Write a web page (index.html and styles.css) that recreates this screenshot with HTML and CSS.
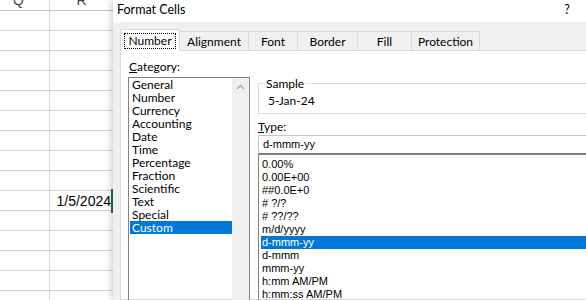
FILE: index.html
```html
<!DOCTYPE html>
<html>
<head>
<meta charset="utf-8">
<link rel="stylesheet" href="styles.css">
</head>
<body>
<div class="screen">
  <div class="sheet">
    <div class="row head"><div class="cell q"><span class="hd">Q</span></div><div class="cell r"><span class="hd">R</span></div></div>
    <div class="row"><div class="cell q"></div><div class="cell r"></div></div>
    <div class="row"><div class="cell q"></div><div class="cell r"></div></div>
    <div class="row"><div class="cell q"></div><div class="cell r"></div></div>
    <div class="row"><div class="cell q"></div><div class="cell r"></div></div>
    <div class="row"><div class="cell q"></div><div class="cell r"></div></div>
    <div class="row"><div class="cell q"></div><div class="cell r"></div></div>
    <div class="row"><div class="cell q"></div><div class="cell r"></div></div>
    <div class="row"><div class="cell q"></div><div class="cell r"></div></div>
    <div class="row"><div class="cell q"></div><div class="cell r"></div></div>
    <div class="row"><div class="cell q"></div><div class="cell r date">1/5/2024</div></div>
    <div class="row"><div class="cell q"></div><div class="cell r"></div></div>
    <div class="row"><div class="cell q"></div><div class="cell r"></div></div>
    <div class="row"><div class="cell q"></div><div class="cell r"></div></div>
    <div class="row"><div class="cell q"></div><div class="cell r"></div></div>
    <div class="row"><div class="cell q"></div><div class="cell r"></div></div>
  </div>
  <div class="dialog">
    <div class="titlebar">
      <span class="title">Format Cells</span>
      <span class="help">?</span>
      <span class="close"></span>
    </div>
    <div class="body">
      <div class="tabs">
        <div class="tab tab-number active"><span class="focus">Number</span></div>
        <div class="tab tab-align">Alignment</div>
        <div class="tab tab-font">Font</div>
        <div class="tab tab-border">Border</div>
        <div class="tab tab-fill">Fill</div>
        <div class="tab tab-prot">Protection</div>
      </div>
      <div class="page">
        <div class="cat-col">
          <div class="label"><u>C</u>ategory:</div>
          <div class="listbox">
            <ul class="items">
              <li>General</li>
              <li>Number</li>
              <li>Currency</li>
              <li>Accounting</li>
              <li>Date</li>
              <li>Time</li>
              <li>Percentage</li>
              <li>Fraction</li>
              <li>Scientific</li>
              <li>Text</li>
              <li>Special</li>
              <li class="selected">Custom</li>
            </ul>
            <div class="scrollbar">
              <div class="arrow">
                <svg width="9" height="6" viewBox="0 0 9 6"><polyline points="1,5 4.5,1.5 8,5" fill="none" stroke="#a6a6a6" stroke-width="1.3"/></svg>
              </div>
            </div>
          </div>
        </div>
        <div class="right-col">
          <fieldset class="sample">
            <legend>Sample</legend>
            <div class="sample-val">5-Jan-24</div>
          </fieldset>
          <div class="label type-label"><u>T</u>ype:</div>
          <div class="type-input">d-mmm-yy</div>
          <ul class="type-list">
            <li>0.00%</li>
            <li>0.00E+00</li>
            <li>##0.0E+0</li>
            <li># ?/?</li>
            <li># ??/??</li>
            <li>m/d/yyyy</li>
            <li class="selected">d-mmm-yy</li>
            <li>d-mmm</li>
            <li>mmm-yy</li>
            <li>h:mm AM/PM</li>
            <li>h:mm:ss AM/PM</li>
          </ul>
        </div>
      </div>
    </div>
  </div>
</div>
</body>
</html>
```
FILE: styles.css
```css
body {
  margin: 0;
  width: 586px;
  height: 300px;
  overflow: hidden;
  background: #fff;
  font-family: Lato, "Noto Sans", sans-serif;
}
.screen {
  display: flex;
  width: 586px;
  height: 300px;
  overflow: hidden;
}
.sheet {
  flex: none;
  width: 113px;
  font-family: "Liberation Sans", Arial, sans-serif;
  font-size: 14px;
  color: #000;
}
.row {
  display: flex;
  height: 20px;
  box-sizing: border-box;
  border-bottom: 1px solid #d4d4d4;
}
.row.head {
  height: 11px;
  overflow: hidden;
  border-bottom-color: #c4c4c4;
}
.cell {
  box-sizing: border-box;
  height: 100%;
}
.cell.q {
  width: 50px;
  border-right: 1px solid #d4d4d4;
  text-align: center;
  padding-right: 12px;
}
.cell.r {
  width: 63px;
  text-align: center;
}
.hd {
  display: block;
  line-height: 14px;
  margin-top: -7px;
  color: #444;
  font-size: 14px;
}
.date {
  position: relative;
  text-align: right !important;
  padding-right: 2px;
  line-height: 20px;
}
.date::after {
  content: "";
  position: absolute;
  right: 0;
  top: -2px;
  bottom: -3px;
  width: 2px;
  background: #217346;
}
.dialog {
  flex: none;
  width: 520px;
  height: 300px;
  background: #f0f0f0;
  box-shadow: 0 0 9px rgba(0, 0, 0, 0.28);
  position: relative;
  z-index: 1;
  display: flex;
  flex-direction: column;
  color: #000;
  font-size: 12px;
}
.titlebar {
  flex: none;
  height: 22px;
  background: #fff;
  display: flex;
  align-items: center;
  padding-bottom: 3px;
  box-sizing: border-box;
  font-size: 12.5px;
}
.title {
  padding-left: 4px;
}
.help {
  margin-left: auto;
  width: 28px;
  text-align: center;
}
.close {
  width: 52px;
}
.body {
  flex: 1;
  min-height: 0;
  padding: 7px 0 0 7px;
  display: flex;
  flex-direction: column;
}
.tabs {
  flex: none;
  height: 21px;
  display: flex;
  align-items: flex-end;
}
.tab {
  box-sizing: border-box;
  height: 19px;
  border: 1px solid #d9d9d9;
  border-bottom: none;
  margin-right: -1px;
  background: #f0f0f0;
  text-align: center;
  padding-top: 2px;
  line-height: 16px;
}
.tab.active {
  height: 22px;
  margin-bottom: -1px;
  background: #fff;
  position: relative;
  z-index: 1;
  padding-top: 3px;
}
.focus {
  display: inline-block;
  border: 1px dotted #000;
  padding: 0 3px;
  line-height: 14px;
}
.tab-number { width: 60px; }
.tab-align { width: 70px; }
.tab-font { width: 50px; }
.tab-border { width: 61px; }
.tab-fill { width: 55px; }
.tab-prot { width: 69px; }
.page {
  flex: 1;
  min-height: 0;
  background: #fff;
  border: 1px solid #d9d9d9;
  display: flex;
  gap: 8px;
  padding-left: 7px;
}
.cat-col {
  flex: none;
  width: 122px;
  padding-top: 8px;
}
.label {
  line-height: 15px;
  padding-left: 1px;
}
.listbox {
  margin-top: 3px;
  border: 1px solid #828282;
  display: flex;
  height: 300px;
}
.items {
  list-style: none;
  margin: 0;
  padding: 0 0 0 1px;
  flex: 1;
}
.items li {
  line-height: 13px;
  padding-left: 2px;
  white-space: nowrap;
}
.selected {
  background: #0078d7;
  color: #fff;
}
.scrollbar {
  flex: none;
  width: 17px;
  background: #f0f0f0;
}
.arrow {
  height: 17px;
  display: flex;
  align-items: center;
  justify-content: center;
}
.right-col {
  flex: none;
  width: 330px;
  padding-top: 25px;
}
.sample {
  margin: 0;
  min-width: 0;
  border: 1px solid #dcdcdc;
  padding: 3px 8px 6px 9px;
}
.sample legend {
  padding: 0 1px;
  margin-left: -3px;
  line-height: 15px;
}
.sample-val {
  line-height: 13px;
}
.type-label {
  margin-top: 5px;
  padding-left: 0;
}
.type-input {
  margin-top: 1px;
  height: 19px;
  box-sizing: border-box;
  border: 1px solid #c6c6c6;
  border-bottom-color: #7a7a7a;
  font-family: "Liberation Sans", Arial, sans-serif;
  font-size: 11px;
  line-height: 17px;
  padding-left: 4px;
}
.type-list {
  list-style: none;
  margin: 0;
  border: 1px solid #828282;
  border-right: none;
  padding: 3px 0 0 2px;
  font-family: "Liberation Sans", Arial, sans-serif;
  font-size: 11px;
  height: 200px;
}
.type-list li {
  line-height: 13px;
  padding-left: 1px;
  white-space: nowrap;
}
```
